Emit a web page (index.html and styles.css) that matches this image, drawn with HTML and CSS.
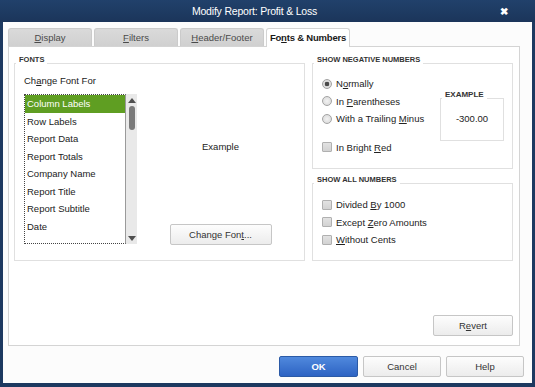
FILE: index.html
```html
<!DOCTYPE html>
<html lang="en">

<head>
    <meta charset="UTF-8">
    <meta name="viewport" content="width=device-width, initial-scale=1.0">
    <title>Modify Report: Profit &amp; Loss</title>
    <link rel="stylesheet" href="styles.css">
</head>

<body>
    <div class="window">
        <div class="titlebar">
            <div class="title">Modify Report: Profit &amp; Loss</div>
            <div class="close">&#10006;</div>
        </div>

        <div class="content">
            <div class="tabs">
                <div class="tab"><u>D</u>isplay</div>
                <div class="tab"><u>F</u>ilters</div>
                <div class="tab"><u>H</u>eader/Footer</div>
                <div class="tab active">Fo<u>n</u>ts &amp; Numbers</div>
            </div>

            <div class="panel">
                <div class="groups">
                    <fieldset class="group fonts">
                        <legend>FONTS</legend>
                        <div class="fonts-body">
                            <div class="list-col">
                                <div class="caption">Ch<u>a</u>nge Font For</div>
                                <div class="listbox">
                                    <ul class="items">
                                        <li class="selected">Column Labels</li>
                                        <li>Row Labels</li>
                                        <li>Report Data</li>
                                        <li>Report Totals</li>
                                        <li>Company Name</li>
                                        <li>Report Title</li>
                                        <li>Report Subtitle</li>
                                        <li>Date</li>
                                    </ul>
                                    <div class="scrollbar">
                                        <span class="arrow up"></span>
                                        <span class="thumb"></span>
                                        <span class="arrow down"></span>
                                    </div>
                                </div>
                            </div>
                            <div class="preview-col">
                                <div class="example-text">Example</div>
                                <button class="btn change-font">Change Fon<u>t</u>...</button>
                            </div>
                        </div>
                    </fieldset>

                    <div class="right-col">
                        <fieldset class="group negative">
                            <legend>SHOW NEGATIVE NUMBERS</legend>
                            <div class="negative-body">
                                <div class="options">
                                    <div class="opt"><span class="radio checked"></span><span>N<u>o</u>rmally</span></div>
                                    <div class="opt"><span class="radio"></span><span>In <u>P</u>arentheses</span></div>
                                    <div class="opt"><span class="radio"></span><span>With a Trailing <u>M</u>inus</span></div>
                                    <div class="opt red-opt"><span class="check"></span><span>In Bright <u>R</u>ed</span></div>
                                </div>
                                <fieldset class="group example">
                                    <legend>EXAMPLE</legend>
                                    <div class="example-value">-300.00</div>
                                </fieldset>
                            </div>
                        </fieldset>

                        <fieldset class="group all-numbers">
                            <legend>SHOW ALL NUMBERS</legend>
                            <div class="all-body">
                                <div class="opt"><span class="check"></span><span>Divided <u>B</u>y 1000</span></div>
                                <div class="opt"><span class="check"></span><span>Except <u>Z</u>ero Amounts</span></div>
                                <div class="opt"><span class="check"></span><span><u>W</u>ithout Cents</span></div>
                            </div>
                        </fieldset>
                    </div>
                </div>

                <div class="panel-footer">
                    <button class="btn revert">R<u>e</u>vert</button>
                </div>
            </div>

            <div class="dialog-buttons">
                <button class="btn primary">OK</button>
                <button class="btn">Cancel</button>
                <button class="btn">Help</button>
            </div>
        </div>
    </div>
</body>

</html>
```

FILE: styles.css
```css
:root {
    --frame-color: #1d3960;
    --border-color: #d4d4d4;
    --group-border: #e0e0e0;
    --text-color: #222;
    --select-color: #5f9e22;
}

* {
    margin: 0;
    padding: 0;
    box-sizing: border-box;
    font-family: 'Liberation Sans', Arial, sans-serif;
}

body {
    width: 535px;
    height: 387px;
    overflow: hidden;
    color: var(--text-color);
    font-size: 9.5px;
}

u {
    text-decoration-thickness: 1px;
    text-underline-offset: 1px;
}

.window {
    width: 535px;
    height: 387px;
    background: var(--frame-color);
    display: flex;
    flex-direction: column;
}

/* title bar */
.titlebar {
    height: 22px;
    display: flex;
    align-items: center;
    background: linear-gradient(#21416b, #1b355a);
    color: white;
}

.title {
    flex: 1;
    padding-left: 11px;
    text-align: center;
    font-size: 10.5px;
    letter-spacing: -0.2px;
}

.close {
    width: 12px;
    margin-right: 25px;
    font-size: 10px;
    font-weight: bold;
    text-align: center;
}

.content {
    flex: 1;
    margin: 0 3px 4px;
    background: #fcfcfc;
    padding: 6px 8px 0 5px;
    display: flex;
    flex-direction: column;
}

/* tabs */
.tabs {
    display: flex;
    gap: 2px;
    margin-bottom: -1px;
    align-items: flex-start;
}

.tab {
    width: 84px;
    height: 18px;
    line-height: 17px;
    text-align: center;
    color: #4a4a4a;
    background: linear-gradient(#dadada, #d0d0d0);
    border: 1px solid #cbcbcb;
    border-bottom: none;
    border-radius: 3px 3px 0 0;
}

.tab.active {
    position: relative;
    z-index: 1;
    height: 19px;
    background: white;
    border-color: var(--border-color);
    color: #1a1a1a;
    font-weight: bold;
    letter-spacing: -0.2px;
}

.panel {
    height: 300px;
    margin-right: 4px;
    background: white;
    border: 1px solid var(--border-color);
    padding: 9px 6px 9px 5px;
    display: flex;
    flex-direction: column;
}

.groups {
    display: flex;
    gap: 7px;
}

/* group boxes */
.group {
    border: 1px solid var(--group-border);
    padding: 0;
    margin: 0;
    min-width: 0;
}

.group legend {
    margin-left: 1px;
    padding: 0 3px 6px;
    font-size: 7.5px;
    line-height: 8px;
    font-weight: bold;
    color: #333;
}

.fonts {
    width: 291px;
    height: 205px;
}

.fonts-body {
    display: flex;
    padding: 5px 0 0 9px;
}

.list-col {
    width: 113px;
}

.caption {
    line-height: 12px;
}

.listbox {
    margin-top: 7px;
    height: 150px;
    display: flex;
}

.items {
    list-style: none;
    flex: 1;
    border: 1px dotted #444;
    border-right: 1px solid #9a9a9a;
}

.items li {
    height: 17.5px;
    line-height: 17.5px;
    padding-left: 2px;
    white-space: nowrap;
}

.items li.selected {
    background: var(--select-color);
    color: white;
}

.scrollbar {
    width: 11px;
    background: #e9e9e9;
    display: flex;
    flex-direction: column;
    align-items: center;
    padding: 4px 0 3px;
}

.arrow {
    width: 0;
    height: 0;
    border-left: 4px solid transparent;
    border-right: 4px solid transparent;
}

.arrow.up {
    border-bottom: 5px solid #4f4f4f;
}

.arrow.down {
    margin-top: auto;
    border-top: 5px solid #4f4f4f;
}

.thumb {
    width: 6px;
    height: 24px;
    margin-top: 3px;
    border-radius: 3px;
    background: #7a7a7a;
}

.preview-col {
    flex: 1;
    display: flex;
    flex-direction: column;
    align-items: center;
}

.example-text {
    margin-top: 66px;
    line-height: 12px;
}

/* buttons */
.btn {
    height: 21px;
    border: 1px solid #c6c6c6;
    border-radius: 2px;
    background: linear-gradient(#fdfdfd, #ececec);
    color: #333;
    font-size: 9.5px;
}

.change-font {
    width: 102px;
    margin-top: 71px;
}

.right-col {
    width: 201px;
    display: flex;
    flex-direction: column;
    gap: 7px;
}

.negative {
    height: 113px;
}

.negative-body {
    display: flex;
    padding: 5px 8px 0 9px;
}

.options {
    flex: 1;
}

.opt {
    height: 17.5px;
    display: flex;
    align-items: center;
    white-space: nowrap;
}

.red-opt {
    margin-top: 11px;
}

.radio,
.check {
    flex: none;
    width: 10px;
    height: 10px;
    margin-right: 4px;
}

.radio {
    border-radius: 50%;
    border: 1px solid #a3a3a3;
    background: radial-gradient(circle, #f2f2f2, #d6d6d6);
}

.radio.checked {
    background: radial-gradient(circle, #4a4a4a 0 2px, #dedede 2.6px);
}

.check {
    border: 1px solid #b0b0b0;
    border-radius: 1px;
    background: linear-gradient(#e2e2e2, #d2d2d2);
}

.example {
    width: 64px;
    height: 50px;
    margin-top: 16px;
}

.example legend {
    font-size: 8px;
}

.example-value {
    padding-top: 8px;
    line-height: 12px;
    text-align: center;
}

.all-numbers {
    height: 85px;
}

.all-body {
    padding: 6px 0 0 9px;
}

.panel-footer {
    margin-top: 54px;
    display: flex;
    justify-content: flex-end;
}

.revert {
    width: 80px;
}

.dialog-buttons {
    margin-top: 10px;
    display: flex;
    justify-content: flex-end;
    gap: 5px;
}

.dialog-buttons .btn {
    width: 78px;
}

.dialog-buttons .btn.primary {
    width: 79px;
    background: linear-gradient(#5089dd, #2d63c3);
    border-color: #2b5aa6;
    color: white;
    font-weight: bold;
}
```
